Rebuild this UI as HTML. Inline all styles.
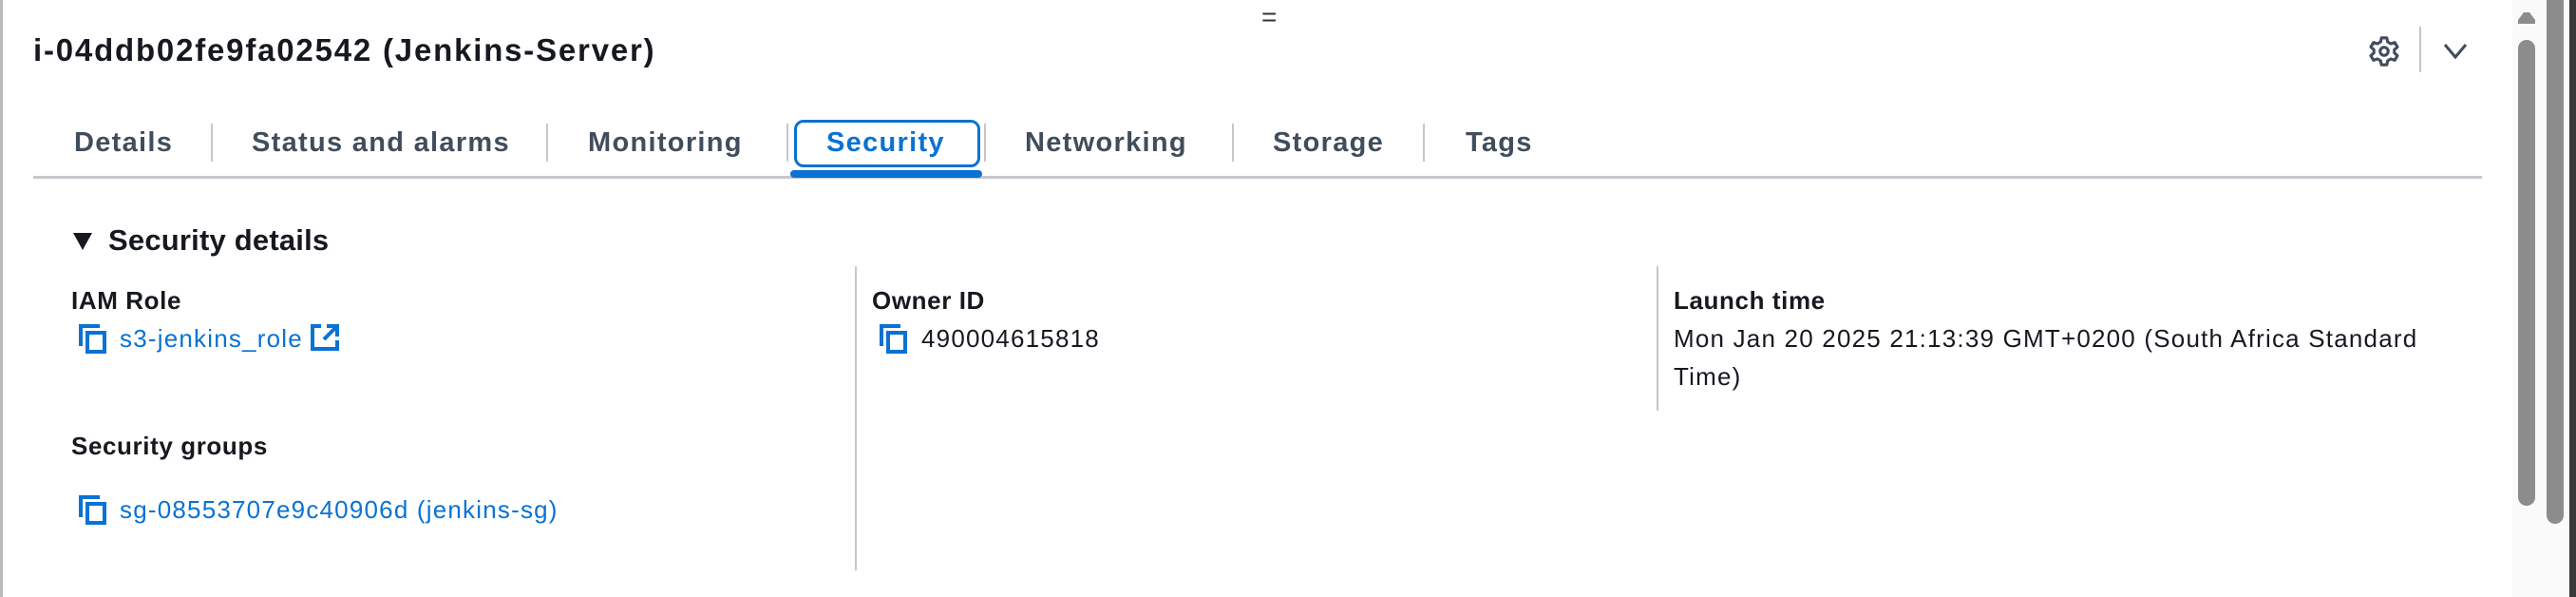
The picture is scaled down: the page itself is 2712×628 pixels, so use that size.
<!DOCTYPE html>
<html><head><meta charset="utf-8"><style>
*{margin:0;padding:0;box-sizing:border-box}
body{width:2712px;height:628px;background:#fff;font-family:"Liberation Sans",sans-serif;color:#16191f;position:relative;overflow:hidden}
.a{position:absolute;white-space:nowrap}
.title{left:35px;top:34px;font-size:33px;font-weight:bold;color:#16191f;letter-spacing:1.8px}
.tab{top:130px;font-size:29px;font-weight:bold;color:#414d5c;line-height:40px;letter-spacing:1.3px}
.sep{position:absolute;top:130px;width:2px;height:40px;background:#c6c6cd}
.lbl{font-size:26px;font-weight:bold;line-height:32px;letter-spacing:0.6px}
.val{font-size:26px;line-height:40px;letter-spacing:1.2px}
.link{color:#0972d3}
.vdiv{position:absolute;width:2px;background:#c6c6cd}
</style></head><body>
<div class="a" style="left:0;top:0;width:3px;height:628px;background:#bbb"></div>
<div class="a" style="left:1328px;top:2px;font-size:28px;color:#333">=</div>
<div class="a title">i-04ddb02fe9fa02542 (Jenkins-Server)</div>

<svg class="a" style="left:2493px;top:37px" width="34" height="34" viewBox="0 0 24 24" fill="none" stroke="#414d5c" stroke-width="2.2" stroke-linejoin="round"><path d="M10 2h4l.6 3 2.4 1.4 2.9-1 2 3.4-2.3 2v2.4l2.3 2-2 3.4-2.9-1L14.6 19 14 22h-4l-.6-3L7 17.6l-2.9 1-2-3.4 2.3-2v-2.4l-2.3-2 2-3.4 2.9 1L9.4 5z"/><circle cx="12" cy="12" r="3"/></svg>
<div class="a" style="left:2547px;top:28px;width:2px;height:48px;background:#c6c6cd"></div>
<svg class="a" style="left:2570px;top:42px" width="30" height="24" viewBox="0 0 30 24" fill="none" stroke="#414d5c" stroke-width="3"><path d="M4 5l11 13L26 5"/></svg>

<div class="a" style="left:2645px;top:0;width:60px;height:628px;background:#fafafa"></div>
<div class="a" style="left:2705px;top:0;width:7px;height:628px;background:#3a3a3a"></div>
<div class="a" style="left:2651px;top:42px;width:18px;height:490px;border-radius:9px;background:#8c8c8c"></div>
<svg class="a" style="left:2651px;top:12px" width="18" height="14"><path d="M6 1h6l6 8v4H0V9z" fill="#8c8c8c"/></svg>
<div class="a" style="left:2681px;top:0;width:18px;height:551px;border-radius:0 0 9px 9px;background:#8c8c8c"></div>

<div class="a tab" style="left:78px">Details</div>
<div class="sep" style="left:222px"></div>
<div class="a tab" style="left:265px">Status and alarms</div>
<div class="sep" style="left:575px"></div>
<div class="a tab" style="left:619px">Monitoring</div>
<div class="sep" style="left:828px"></div>
<div class="a" style="left:836px;top:126px;width:196px;height:50px;border:3px solid #0972d3;border-radius:10px"></div>
<div class="a tab" style="left:870px;color:#0972d3">Security</div>
<div class="sep" style="left:1036px"></div>
<div class="a tab" style="left:1079px">Networking</div>
<div class="sep" style="left:1297px"></div>
<div class="a tab" style="left:1340px">Storage</div>
<div class="sep" style="left:1498px"></div>
<div class="a tab" style="left:1543px">Tags</div>
<div class="a" style="left:35px;top:185px;width:2578px;height:3px;background:#c6c6cd"></div>
<div class="a" style="left:832px;top:179px;width:202px;height:8px;border-radius:4px;background:#0972d3"></div>

<svg class="a" style="left:76px;top:244px" width="22" height="20"><path d="M1 1h20L11 19z" fill="#16191f"/></svg>
<div class="a" style="left:114px;top:235px;font-size:31px;font-weight:bold;letter-spacing:0.2px">Security details</div>

<div class="vdiv" style="left:900px;top:280px;height:320px"></div>
<div class="vdiv" style="left:1744px;top:280px;height:152px"></div>

<div class="a lbl" style="left:75px;top:300px">IAM Role</div>
<svg class="a" style="left:82px;top:340px" width="32" height="32" viewBox="0 0 32 32" fill="none" stroke="#0972d3" stroke-width="4"><path d="M3 24V3h20"/><rect x="10" y="10" width="18" height="20"/></svg>
<div class="a val link" style="left:126px;top:336px">s3-jenkins_role</div>
<svg class="a" style="left:326px;top:340px" width="32" height="30" viewBox="0 0 32 30" fill="none" stroke="#0972d3" stroke-width="4"><path d="M12 3H3v24h26v-9M18 3h11v11M29 3L15 17"/></svg>

<div class="a lbl" style="left:75px;top:453px">Security groups</div>
<svg class="a" style="left:82px;top:520px" width="32" height="32" viewBox="0 0 32 32" fill="none" stroke="#0972d3" stroke-width="4"><path d="M3 24V3h20"/><rect x="10" y="10" width="18" height="20"/></svg>
<div class="a val link" style="left:126px;top:516px">sg-08553707e9c40906d (jenkins-sg)</div>

<div class="a lbl" style="left:918px;top:300px">Owner ID</div>
<svg class="a" style="left:925px;top:340px" width="32" height="32" viewBox="0 0 32 32" fill="none" stroke="#0972d3" stroke-width="4"><path d="M3 24V3h20"/><rect x="10" y="10" width="18" height="20"/></svg>
<div class="a val" style="left:970px;top:336px">490004615818</div>

<div class="a lbl" style="left:1762px;top:300px">Launch time</div>
<div class="a val" style="left:1762px;top:336px">Mon Jan 20 2025 21:13:39 GMT+0200 (South Africa Standard<br>Time)</div>
</body></html>
